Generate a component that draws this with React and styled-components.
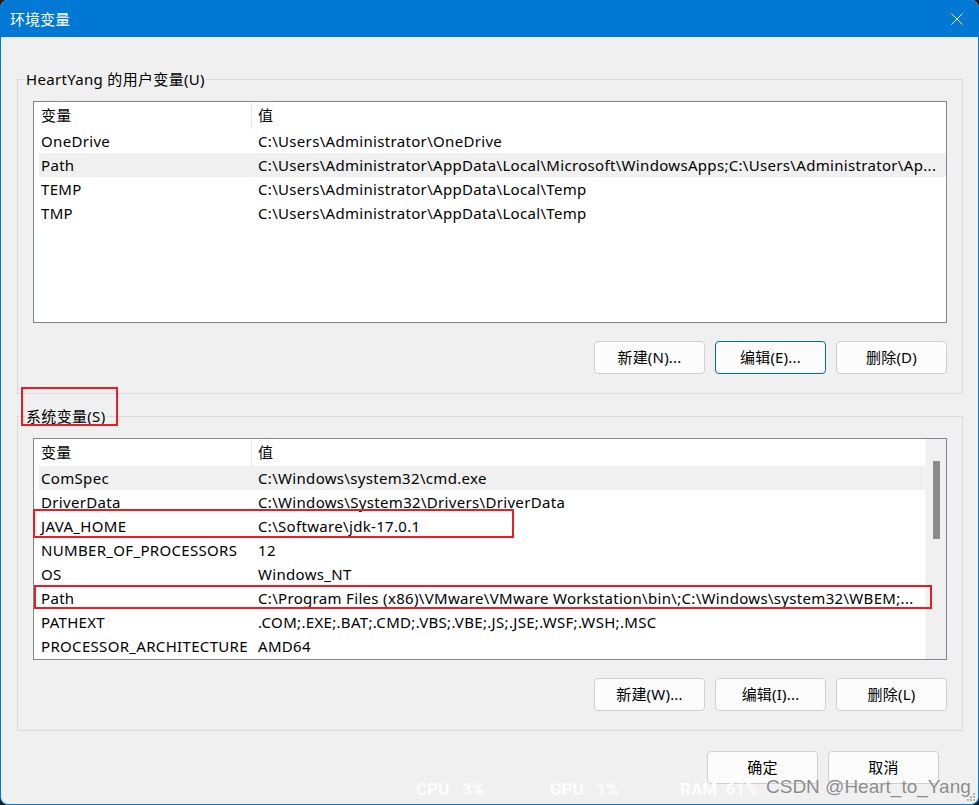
import React from "react";
import styled, { createGlobalStyle } from "styled-components";

const FONT = `"Segoe UI", "Noto Sans", "Noto Sans CJK SC", sans-serif`;

const GlobalStyle = createGlobalStyle`
  html, body { margin: 0; padding: 0; background: #1c1c1c; }
  body { font-family: ${FONT}; -webkit-font-smoothing: antialiased; }
  #root { width: 979px; height: 805px; }
`;

const Window = styled.div`
  position: relative;
  width: 979px;
  height: 805px;
  box-sizing: border-box;
  border: 1px solid #0078d4;
  border-top: none;
  border-radius: 8px;
  overflow: hidden;
  background: #f0f0f0;
  display: flex;
  flex-direction: column;
  font-size: 15px;
  letter-spacing: 0.32px;
  color: #000;
`;

const TitleBar = styled.div`
  height: 37px;
  flex-shrink: 0;
  margin: 0 -1px;
  background: #0078d4;
  color: #fff;
  display: flex;
  align-items: center;
  justify-content: space-between;
  padding: 0 16px 0 10px;
  font-size: 15px;
  letter-spacing: 0;
`;

const CloseIcon = styled.svg`
  width: 12px;
  height: 12px;
  display: block;
`;

const Body = styled.div`
  flex: 1;
  display: flex;
  flex-direction: column;
  padding: 32px 15px 0 16px;
`;

const Group = styled.fieldset`
  margin: 0 0 ${(p) => p.$mb || 0}px 0;
  padding: 12px 15px 19px 15px;
  border: 1px solid #dadada;
  box-sizing: border-box;
  width: 946px;
  min-width: 0;
`;

const Legend = styled.legend`
  margin-left: -8px;
  padding: 0 1px;
  line-height: 20px;
  font-size: 15px;
`;

const ListBox = styled.div`
  height: 222px;
  box-sizing: border-box;
  border: 1px solid #828790;
  background: #fff;
  display: flex;
  overflow: hidden;
`;

const ListMain = styled.div`
  flex: 1;
  min-width: 0;
  display: flex;
  flex-direction: column;
`;

const Header = styled.div`
  height: 27px;
  display: grid;
  grid-template-columns: 217px 1fr;
  align-items: stretch;
  flex-shrink: 0;
`;

const HeadCell = styled.div`
  display: flex;
  align-items: center;
  padding-left: ${(p) => (p.$first ? 7 : 6)}px;
  padding-bottom: 3px;
  border-left: ${(p) => (p.$first ? "none" : "1px solid #e5e5e5")};
  margin: 1px 0 0 0;
`;

const Rows = styled.div`
  padding-left: 5px;
`;

const Row = styled.div`
  height: 24px;
  display: grid;
  grid-template-columns: 212px 1fr;
  align-items: center;
  background: ${(p) => (p.$hl ? "#f0f0f0" : "transparent")};
`;

const Cell = styled.div`
  padding-left: ${(p) => (p.$first ? 2 : 7)}px;
  white-space: nowrap;
  overflow: hidden;
`;

const ScrollBar = styled.div`
  width: 21px;
  flex-shrink: 0;
  background: #f0f0f0;
  display: flex;
  justify-content: center;
  padding-top: 22px;
  box-sizing: border-box;
  border-left: 1px solid #f7f7f7;
`;

const Thumb = styled.div`
  width: 7px;
  height: 78px;
  background: #8a8a8a;
`;

const ButtonRow = styled.div`
  display: flex;
  justify-content: flex-end;
  gap: 10px;
  margin-top: ${(p) => p.$mt || 18}px;
  padding-right: ${(p) => p.$pr || 0}px;
`;

const Button = styled.div`
  width: 111px;
  height: 33px;
  box-sizing: border-box;
  border: 1px solid ${(p) => (p.$focus ? "#0067c0" : "#d0d0d0")};
  border-radius: 4px;
  background: #fcfcfc;
  display: flex;
  align-items: center;
  justify-content: center;
  font-size: 15px;
  line-height: 1;
  letter-spacing: 0.2px;
  padding-bottom: 1px;
`;

const Mark = styled.div`
  position: absolute;
  border: 2px solid #ed1c24;
  box-sizing: border-box;
  pointer-events: none;
`;

const StatsBar = styled.div`
  position: absolute;
  left: 415px;
  top: 779px;
  display: flex;
  font-family: "Roboto", sans-serif;
  font-weight: 700;
  font-size: 17px;
  line-height: 20px;
  color: rgba(255, 255, 255, 0.92);
  letter-spacing: 0;
`;

const Stat = styled.span`
  width: ${(p) => p.$w}px;
  white-space: pre;
`;

const Watermark = styled.div`
  position: absolute;
  left: 765px;
  top: 777px;
  font-family: "Liberation Sans", Arial, sans-serif;
  font-size: 19px;
  line-height: 19px;
  letter-spacing: 0;
  color: #8c8c8c;
  text-shadow: 0 0 1px #fff;
  white-space: nowrap;
`;

const Grip = styled.svg`
  position: absolute;
  right: 2px;
  bottom: 2px;
  width: 10px;
  height: 10px;
`;

const userVars = [
  ["OneDrive", "C:\\Users\\Administrator\\OneDrive"],
  ["Path", "C:\\Users\\Administrator\\AppData\\Local\\Microsoft\\WindowsApps;C:\\Users\\Administrator\\Ap...", true],
  ["TEMP", "C:\\Users\\Administrator\\AppData\\Local\\Temp"],
  ["TMP", "C:\\Users\\Administrator\\AppData\\Local\\Temp"],
];

const sysVars = [
  ["ComSpec", "C:\\Windows\\system32\\cmd.exe", true],
  ["DriverData", "C:\\Windows\\System32\\Drivers\\DriverData"],
  ["JAVA_HOME", "C:\\Software\\jdk-17.0.1"],
  ["NUMBER_OF_PROCESSORS", "12"],
  ["OS", "Windows_NT"],
  ["Path", "C:\\Program Files (x86)\\VMware\\VMware Workstation\\bin\\;C:\\Windows\\system32\\WBEM;..."],
  ["PATHEXT", ".COM;.EXE;.BAT;.CMD;.VBS;.VBE;.JS;.JSE;.WSF;.WSH;.MSC"],
  ["PROCESSOR_ARCHITECTURE", "AMD64"],
];

function VarList({ rows, scroll }) {
  return (
    <ListBox>
      <ListMain>
        <Header>
          <HeadCell $first>变量</HeadCell>
          <HeadCell>值</HeadCell>
        </Header>
        <Rows>
          {rows.map(([k, v, hl]) => (
            <Row key={k + v} $hl={hl}>
              <Cell $first>{k}</Cell>
              <Cell>{v}</Cell>
            </Row>
          ))}
        </Rows>
      </ListMain>
      {scroll && (
        <ScrollBar>
          <Thumb />
        </ScrollBar>
      )}
    </ListBox>
  );
}

export default function App() {
  return (
    <>
      <GlobalStyle />
      <Window>
        <TitleBar>
          <span>环境变量</span>
          <CloseIcon viewBox="0 0 12 12">
            <path d="M0.5 0.5 L11.5 11.5 M11.5 0.5 L0.5 11.5" stroke="#fff" strokeWidth="1" />
          </CloseIcon>
        </TitleBar>
        <Body>
          <Group $mb={12}>
            <Legend>HeartYang 的用户变量(U)</Legend>
            <VarList rows={userVars} />
            <ButtonRow>
              <Button>新建(N)...</Button>
              <Button $focus>编辑(E)...</Button>
              <Button>删除(D)</Button>
            </ButtonRow>
          </Group>
          <Group>
            <Legend>系统变量(S)</Legend>
            <VarList rows={sysVars} scroll />
            <ButtonRow>
              <Button>新建(W)...</Button>
              <Button>编辑(I)...</Button>
              <Button>删除(L)</Button>
            </ButtonRow>
          </Group>
          <ButtonRow $mt={20} $pr={24}>
            <Button>确定</Button>
            <Button>取消</Button>
          </ButtonRow>
        </Body>
        <Mark style={{ left: 20, top: 387, width: 97, height: 39 }} />
        <Mark style={{ left: 32, top: 509, width: 481, height: 29 }} />
        <Mark style={{ left: 33, top: 585, width: 898, height: 24 }} />
        <StatsBar>
          <Stat $w={134}>{"CPU   3%"}</Stat>
          <Stat $w={130}>{"GPU   1%"}</Stat>
          <Stat $w={80}>{"RAM  61%"}</Stat>
        </StatsBar>
        <Watermark>CSDN @Heart_to_Yang</Watermark>
        <Grip viewBox="0 0 10 10">
          {[[8, 2], [5, 5], [8, 5], [2, 8], [5, 8], [8, 8]].map(([x, y]) => (
            <rect key={x + "-" + y} x={x - 1} y={y - 1} width="2" height="2" fill="#b5b5b5" />
          ))}
        </Grip>
      </Window>
    </>
  );
}
